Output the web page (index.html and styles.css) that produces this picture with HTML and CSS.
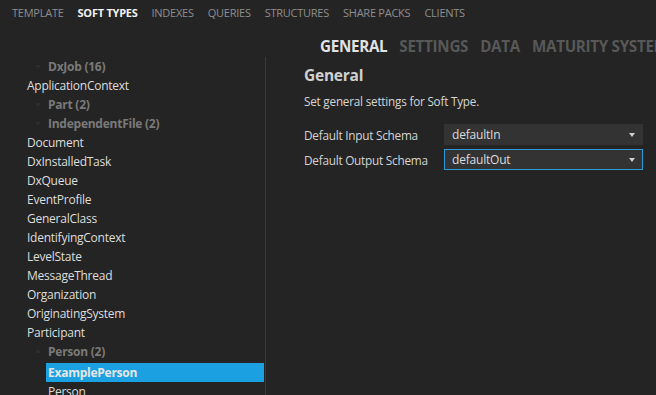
FILE: index.html
```html
<!DOCTYPE html>
<html>
<head>
<meta charset="utf-8">
<link rel="stylesheet" href="styles.css">
</head>
<body>
<div class="app">
  <nav class="topnav">
    <span class="nav-item">Template</span>
    <span class="nav-item active">Soft Types</span>
    <span class="nav-item">Indexes</span>
    <span class="nav-item">Queries</span>
    <span class="nav-item">Structures</span>
    <span class="nav-item">Share Packs</span>
    <span class="nav-item">Clients</span>
  </nav>
  <div class="tabs">
    <span class="tab active">GENERAL</span>
    <span class="tab">SETTINGS</span>
    <span class="tab">DATA</span>
    <span class="tab">MATURITY SYSTEMS</span>
  </div>
  <div class="main">
    <aside class="sidebar">
      <ul class="tree">
        <li class="row group"><span class="chev down"></span>DxJob (16)</li>
        <li class="row">ApplicationContext</li>
        <li class="row group"><span class="chev down"></span>Part (2)</li>
        <li class="row group"><span class="chev down"></span>IndependentFile (2)</li>
        <li class="row">Document</li>
        <li class="row">DxInstalledTask</li>
        <li class="row">DxQueue</li>
        <li class="row">EventProfile</li>
        <li class="row">GeneralClass</li>
        <li class="row">IdentifyingContext</li>
        <li class="row">LevelState</li>
        <li class="row">MessageThread</li>
        <li class="row">Organization</li>
        <li class="row">OriginatingSystem</li>
        <li class="row">Participant</li>
        <li class="row group"><span class="chev up"></span>Person (2)</li>
        <li class="row child selected">ExamplePerson</li>
        <li class="row child">Person</li>
      </ul>
    </aside>
    <section class="content">
      <h2 class="heading">General</h2>
      <p class="desc">Set general settings for Soft Type.</p>
      <div class="form">
        <div class="field">
          <label class="label">Default Input Schema</label>
          <div class="select"><span>defaultIn</span><span class="caret"></span></div>
        </div>
        <div class="field">
          <label class="label">Default Output Schema</label>
          <div class="select focused"><span>defaultOut</span><span class="caret"></span></div>
        </div>
      </div>
    </section>
  </div>
</div>
</body>
</html>
```

FILE: styles.css
```css
* { box-sizing: border-box; }
html, body {
  margin: 0;
  padding: 0;
  background: #242424;
  width: 656px;
  height: 395px;
  overflow: hidden;
  font-family: "Open Sans", "Noto Sans", sans-serif;
  color: #d8d8d8;
}
.app { width: 656px; height: 395px; overflow: hidden; }

.topnav {
  height: 24px;
  display: flex;
  align-items: center;
  gap: 14px;
  padding-left: 12px;
  font-size: 11px;
  letter-spacing: -0.25px;
  text-transform: uppercase;
  white-space: nowrap;
}
.nav-item { color: #8e8e8e; }
.nav-item.active { color: #f2f2f2; font-weight: 700; }

.tabs {
  height: 33px;
  padding-top: 12px;
  padding-left: 320px;
  display: flex;
  gap: 12px;
  white-space: nowrap;
  overflow: hidden;
  font-size: 15.2px;
  line-height: 20px;
  font-weight: 700;
  letter-spacing: -0.3px;
}
.tab { color: #585858; flex: none; }
.tab.active { color: #e2e2e2; }

.main {
  display: flex;
  height: 338px;
}
.sidebar {
  width: 266px;
  flex: none;
  border-right: 1px solid #3a3a3a;
  height: 100%;
}
.tree {
  list-style: none;
  margin: 0;
  padding: 0 1px 0 0;
}
.row {
  height: 19px;
  line-height: 19px;
  font-size: 12px;
  letter-spacing: -0.25px;
  padding-left: 27px;
  color: #dedede;
  white-space: nowrap;
  display: flex;
  align-items: center;
}
.row.group {
  padding-left: 34px;
  color: #7a7a7a;
  font-weight: 700;
}
.chev {
  width: 14px;
  flex: none;
  height: 19px;
  position: relative;
}
.chev::before {
  content: "";
  position: absolute;
  left: 1px;
  top: 8px;
  border-left: 3.5px solid transparent;
  border-right: 3.5px solid transparent;
}
.chev.down::before { border-top: 4px solid #2e2e2e; }
.chev.up::before { border-bottom: 4px solid #2e2e2e; top: 7px; }
.row.child { padding-left: 48px; }
.row.selected {
  margin-top: 2px;
  margin-left: 46px;
  padding-left: 2px;
  background: #1ba1e2;
  color: #e6e6e6;
  font-weight: 700;
}

.content {
  flex: 1;
  padding-left: 38px;
}
.heading {
  margin: 8px 0 0;
  font-size: 15.5px;
  line-height: 20px;
  font-weight: 700;
  color: #d0d0d0;
  letter-spacing: -0.25px;
}
.desc {
  margin: 8px 0 0;
  font-size: 11.7px;
  line-height: 16px;
  color: #d6d6d6;
  letter-spacing: -0.2px;
}
.form {
  margin-top: 15px;
  display: flex;
  flex-direction: column;
  gap: 4px;
}
.field {
  display: flex;
  align-items: center;
  height: 21px;
}
.label {
  width: 140px;
  flex: none;
  font-size: 11.8px;
  color: #d4d4d4;
  letter-spacing: -0.25px;
}
.select {
  width: 199px;
  height: 21px;
  background: #333333;
  border: 1px solid #333333;
  display: flex;
  align-items: center;
  justify-content: space-between;
  padding: 0 7px 0 7px;
  font-size: 12px;
  color: #dcdcdc;
  letter-spacing: -0.2px;
}
.select.focused { border-color: #2b9ad6; }
.caret {
  width: 0;
  height: 0;
  border-left: 3.5px solid transparent;
  border-right: 3.5px solid transparent;
  border-top: 4px solid #cfcfcf;
}
```
